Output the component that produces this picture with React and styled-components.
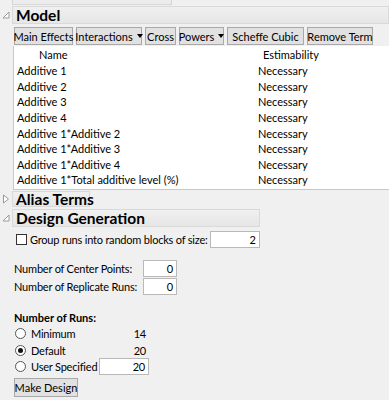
import React from "react";
import styled, { createGlobalStyle } from "styled-components";

const Global = createGlobalStyle`
  html, body { margin: 0; padding: 0; }
  body {
    background: #f0f0f0;
    font-family: "Segoe UI", Lato, "Noto Sans", sans-serif;
    font-size: 11px;
    letter-spacing: -0.2px;
    color: #000;
    width: 389px;
    height: 400px;
    overflow: hidden;
    white-space: nowrap;
  }
`;

const Page = styled.div`
  display: flex;
  flex-direction: column;
  width: 389px;
`;

const Stub = styled.div`
  margin-left: 12px;
  width: 158px;
  height: 4px;
  border: 1px solid #d6d6d6;
  border-top: none;
  background: #ececec;
`;

const Section = styled.div`
  display: grid;
  grid-template-columns: 12px 1fr;
  margin-top: ${(p) => p.$mt || 0}px;
`;

const Gutter = styled.div`
  display: flex;
  align-items: center;
  justify-content: center;
  height: ${(p) => p.$h}px;
`;

const Title = styled.div`
  box-sizing: border-box;
  height: ${(p) => p.$h}px;
  width: ${(p) => (p.$w ? `${p.$w}px` : "auto")};
  justify-self: ${(p) => (p.$full ? "stretch" : "start")};
  display: flex;
  align-items: center;
  padding: 0 4px 0 3px;
  background: linear-gradient(#f0f0f0, #e6e6e6);
  border: 1px solid #d9d9d9;
  font-weight: 700;
  font-size: 15.5px;
  letter-spacing: 0;
`;

const Body = styled.div`
  grid-column: 2;
  display: flex;
  flex-direction: column;
`;

const Toolbar = styled.div`
  display: flex;
  gap: 3px;
  padding: 3px 0 1px 2px;
`;

const Btn = styled.button`
  box-sizing: border-box;
  height: 18px;
  width: ${(p) => p.$w}px;
  padding: 0 2px;
  display: inline-flex;
  align-items: center;
  justify-content: center;
  gap: 4px;
  background: #e1e1e1;
  border: 1px solid #a9a9a9;
  font-family: inherit;
  font-size: 11px;
  letter-spacing: 0;
  color: #000;
  white-space: nowrap;
  flex-shrink: 0;
`;

const Caret = styled.span`
  width: 0;
  height: 0;
  border-left: 3px solid transparent;
  border-right: 3px solid transparent;
  border-top: 4px solid #000;
`;

const Table = styled.div`
  margin-left: 1px;
  background: #fff;
  border-left: 1px solid #c8c8c8;
  border-bottom: 1px solid #c8c8c8;
  display: flex;
  flex-direction: column;
  padding-bottom: 1px;
`;

const Row = styled.div`
  display: grid;
  grid-template-columns: 241px 1fr;
  height: ${(p) => (p.$head ? 17 : 15.6)}px;
  align-items: center;
  letter-spacing: 0;
`;

const Cell = styled.div`
  padding-left: ${(p) => p.$pl || 0}px;
`;

const Line = styled.div`
  display: flex;
  align-items: center;
  height: ${(p) => p.$h || 16}px;
  margin-top: ${(p) => p.$mt || 0}px;
  padding-left: ${(p) => p.$pl || 0}px;
`;

const Check = styled.span`
  box-sizing: border-box;
  flex-shrink: 0;
  width: 11px;
  height: 11px;
  border: 1px solid #333;
  background: #fff;
  margin-right: 3px;
`;

const Radio = styled.span`
  box-sizing: border-box;
  flex-shrink: 0;
  width: 11px;
  height: 11px;
  border-radius: 50%;
  border: 1px solid #555;
  background: #fff;
  display: inline-flex;
  align-items: center;
  justify-content: center;
  margin-right: 5px;
  &::after {
    content: "";
    width: 5px;
    height: 5px;
    border-radius: 50%;
    background: ${(p) => (p.$on ? "#111" : "transparent")};
  }
`;

const Field = styled.div`
  box-sizing: border-box;
  width: ${(p) => p.$w}px;
  height: ${(p) => p.$h || 17}px;
  margin-left: ${(p) => p.$ml || 0}px;
  background: #fff;
  border: 1px solid #b9b9b9;
  display: flex;
  align-items: center;
  justify-content: flex-end;
  padding-right: 3px;
`;

const FormGrid = styled.div`
  display: grid;
  grid-template-columns: 129px auto;
  row-gap: 1px;
  justify-content: start;
  align-items: center;
  padding-left: 2px;
  margin-top: ${(p) => p.$mt || 0}px;
`;

const Bold = styled.div`
  font-weight: 700;
  padding-left: 2px;
  margin-top: ${(p) => p.$mt || 0}px;
  height: 15px;
  display: flex;
  align-items: center;
  letter-spacing: 0;
`;

const RunsGrid = styled.div`
  display: grid;
  grid-template-columns: 84px 50px;
  grid-auto-rows: 16.3px;
  align-items: center;
  padding-left: 3px;
  margin-top: 1px;
`;

const RadioLabel = styled.div`
  display: flex;
  align-items: center;
`;

const Num = styled.div`
  text-align: right;
  padding-right: 3px;
`;

const MakeBtn = styled(Btn)`
  margin-top: 3px;
  margin-left: 2px;
  height: 19px;
`;

const OpenTri = () => (
  <svg width="8" height="8" viewBox="0 0 8 8">
    <polygon points="7,1 7,7 1,7" fill="#fff" stroke="#9a9a9a" strokeWidth="1" />
  </svg>
);

const ClosedTri = () => (
  <svg width="8" height="10" viewBox="0 0 8 10">
    <polygon points="1.5,1 6.5,5 1.5,9" fill="#fff" stroke="#9a9a9a" strokeWidth="1" />
  </svg>
);

const terms = [
  "Additive 1",
  "Additive 2",
  "Additive 3",
  "Additive 4",
  "Additive 1*Additive 2",
  "Additive 1*Additive 3",
  "Additive 1*Additive 4",
  "Additive 1*Total additive level (%)",
];

export default function App() {
  return (
    <>
      <Global />
      <Page>
        <Stub />
        <Section $mt={1}>
          <Gutter $h={18}>
            <OpenTri />
          </Gutter>
          <Title $h={18} $full>
            Model
          </Title>
          <Body>
            <Toolbar>
              <Btn $w={59}>Main Effects</Btn>
              <Btn $w={66}>
                Interactions <Caret />
              </Btn>
              <Btn $w={31}>Cross</Btn>
              <Btn $w={45}>
                Powers <Caret />
              </Btn>
              <Btn $w={77}>Scheffe Cubic</Btn>
              <Btn $w={66}>Remove Term</Btn>
            </Toolbar>
            <Table>
              <Row $head>
                <Cell $pl={25}>Name</Cell>
                <Cell $pl={8}>Estimability</Cell>
              </Row>
              {terms.map((t) => (
                <Row key={t}>
                  <Cell $pl={3}>{t}</Cell>
                  <Cell $pl={3}>Necessary</Cell>
                </Row>
              ))}
            </Table>
          </Body>
        </Section>
        <Section $mt={1}>
          <Gutter $h={16}>
            <ClosedTri />
          </Gutter>
          <Title $h={16} $w={78}>
            Alias Terms
          </Title>
        </Section>
        <Section $mt={2}>
          <Gutter $h={18}>
            <OpenTri />
          </Gutter>
          <Title $h={18} $w={248}>
            Design Generation
          </Title>
          <Body>
            <Line $mt={4} $pl={4} $h={17}>
              <Check />
              Group runs into random blocks of size:
              <Field $w={50} $ml={2}>2</Field>
            </Line>
            <FormGrid $mt={12}>
              <span>Number of Center Points:</span>
              <Field $w={34}>0</Field>
              <span>Number of Replicate Runs:</span>
              <Field $w={34}>0</Field>
            </FormGrid>
            <Bold $mt={15}>Number of Runs:</Bold>
            <RunsGrid>
              <RadioLabel>
                <Radio />
                Minimum
              </RadioLabel>
              <Num>14</Num>
              <RadioLabel>
                <Radio $on />
                Default
              </RadioLabel>
              <Num>20</Num>
              <RadioLabel>
                <Radio />
                User Specified
              </RadioLabel>
              <Field $w={50}>20</Field>
            </RunsGrid>
            <MakeBtn $w={64}>Make Design</MakeBtn>
          </Body>
        </Section>
      </Page>
    </>
  );
}
